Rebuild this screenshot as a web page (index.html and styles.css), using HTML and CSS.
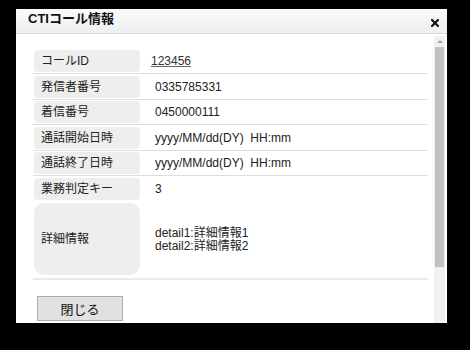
FILE: index.html
```
<!DOCTYPE html>
<html lang="ja">

<head>
    <meta charset="UTF-8">
    <meta name="viewport" content="width=device-width, initial-scale=1.0">
    <title>CTIコール情報</title>

    <link rel="stylesheet" href="styles.css">
</head>

<body>

    <div class="dialog">

        <div class="dialog-header">
            <span class="dialog-title">CTIコール情報</span>
            <a href="javascript:;" class="close-btn">
                <svg width="8" height="8" viewBox="0 0 8 8">
                    <path d="M1 1 L7 7 M7 1 L1 7" stroke="#111" stroke-width="2.2" stroke-linecap="square" />
                </svg>
            </a>
        </div>

        <div class="dialog-body">

            <div class="content">

                <div class="info">
                    <div class="row">
                        <div class="label">コールID</div>
                        <div class="value"><a href="javascript:;" class="call-id">123456</a></div>
                    </div>
                    <div class="row">
                        <div class="label">発信者番号</div>
                        <div class="value">0335785331</div>
                    </div>
                    <div class="row">
                        <div class="label">着信番号</div>
                        <div class="value">0450000111</div>
                    </div>
                    <div class="row">
                        <div class="label">通話開始日時</div>
                        <div class="value">yyyy/MM/dd(DY)&nbsp;&nbsp;HH:mm</div>
                    </div>
                    <div class="row">
                        <div class="label">通話終了日時</div>
                        <div class="value">yyyy/MM/dd(DY)&nbsp;&nbsp;HH:mm</div>
                    </div>
                    <div class="row noline">
                        <div class="label">業務判定キー</div>
                        <div class="value">3</div>
                    </div>
                    <div class="row detail-row">
                        <div class="label">詳細情報</div>
                        <div class="value detail">
                            detail1:詳細情報1<br>
                            detail2:詳細情報2
                        </div>
                    </div>
                </div>

                <div class="footer">
                    <button>閉じる</button>
                </div>

            </div>

            <div class="scrollbar">
                <div class="arrow"></div>
                <div class="thumb"></div>
            </div>

        </div>

    </div>

</body>

</html>
```

FILE: styles.css
```
* {
    margin: 0;
    padding: 0;
    box-sizing: border-box;
}

body {
    background-color: #000;
    padding: 9px 0 0 16px;
    font-family: "Liberation Sans", "Noto Sans CJK JP", sans-serif;
    font-size: 12px;
    color: #222;
}

.dialog {
    width: 431px;
    height: 314px;
    background-color: #fff;
    display: flex;
    flex-direction: column;
    overflow: hidden;
}

.dialog-header {
    height: 25px;
    display: flex;
    justify-content: space-between;
    background: linear-gradient(#fafafa, #efefef);
    border-bottom: 1px solid #d8d8d8;
    padding: 2px 8px 0 12px;
}

.dialog-title {
    font-size: 13px;
    font-weight: bold;
    line-height: 15px;
    color: #111;
}

.close-btn {
    display: block;
    margin-top: 8px;
    width: 8px;
    height: 8px;
}

.close-btn svg {
    display: block;
}

.dialog-body {
    flex: 1;
    display: flex;
    min-height: 0;
}

.content {
    flex: 1;
    overflow: hidden;
    padding: 14.5px 6px 0 17px;
}

.row {
    display: flex;
    border-bottom: 1px solid #dedede;
    padding: 1.5px 0 1px 1px;
}

.row.noline {
    border-bottom-color: transparent;
}

.label {
    width: 106px;
    height: 22px;
    line-height: 22px;
    padding-left: 7px;
    background-color: #eeeeee;
    border-radius: 4px;
    flex-shrink: 0;
}

.value {
    display: flex;
    align-items: center;
    padding-left: 15px;
    line-height: 14px;
    color: #222;
}

.call-id {
    margin-left: -4px;
    color: #333;
    text-decoration: underline;
    text-decoration-color: #666;
}

.detail-row {
    padding-bottom: 3px;
    border-bottom: 2px solid #ebebeb;
}

.detail-row .label {
    height: 72px;
    line-height: 72px;
    border-radius: 10px;
}

.value.detail {
    display: block;
    align-self: center;
    line-height: 13px;
    padding-top: 1px;
}

.footer {
    padding: 16px 0 0 4px;
}

button {
    width: 86px;
    height: 25px;
    background-color: #e1e1e1;
    border: 1px solid #adadad;
    font-family: "Liberation Sans", "Noto Sans CJK JP", sans-serif;
    font-size: 13px;
    color: #111;
}

.scrollbar {
    width: 11px;
    margin: 2px 2px 0 0;
    background-color: #f0f0f0;
    display: flex;
    flex-direction: column;
    align-items: center;
}

.arrow {
    margin-top: 4px;
    width: 0;
    height: 0;
    border-left: 3px solid transparent;
    border-right: 3px solid transparent;
    border-bottom: 3px solid #a3a3a3;
}

.thumb {
    margin-top: 4px;
    width: 9px;
    height: 220px;
    background-color: #c1c1c1;
}
```
